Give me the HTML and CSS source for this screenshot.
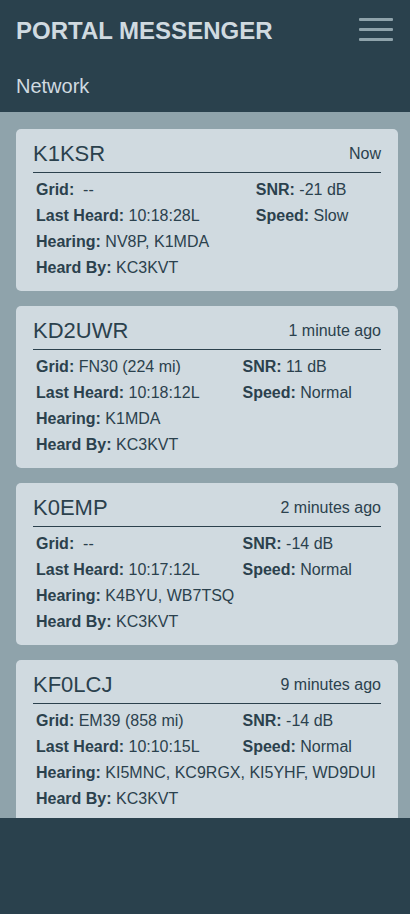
FILE: index.html
```html
<!DOCTYPE html>
<html lang="en">
<head>
<meta charset="utf-8">
<title>Portal Messenger - Network</title>
<link rel="stylesheet" href="styles.css">
</head>
<body>
<header class="app-header">
  <div class="topbar">
    <h1 class="brand">PORTAL MESSENGER</h1>
    <button class="menu-btn" aria-label="Menu">
      <span></span><span></span><span></span>
    </button>
  </div>
  <div class="page-title">Network</div>
</header>
<main class="content">
  <section class="card">
    <div class="card-head"><span class="call">K1KSR</span><span class="when">Now</span></div>
    <table class="info">
      <tr><td><b>Grid:</b>&nbsp; --</td><td><b>SNR:</b> -21 dB</td></tr>
      <tr><td><b>Last Heard:</b> 10:18:28L</td><td><b>Speed:</b> Slow</td></tr>
      <tr><td colspan="2"><b>Hearing:</b> NV8P, K1MDA</td></tr>
      <tr><td colspan="2"><b>Heard By:</b> KC3KVT</td></tr>
    </table>
  </section>
  <section class="card">
    <div class="card-head"><span class="call">KD2UWR</span><span class="when">1 minute ago</span></div>
    <table class="info">
      <tr><td><b>Grid:</b> FN30 (224 mi)</td><td><b>SNR:</b> 11 dB</td></tr>
      <tr><td><b>Last Heard:</b> 10:18:12L</td><td><b>Speed:</b> Normal</td></tr>
      <tr><td colspan="2"><b>Hearing:</b> K1MDA</td></tr>
      <tr><td colspan="2"><b>Heard By:</b> KC3KVT</td></tr>
    </table>
  </section>
  <section class="card">
    <div class="card-head"><span class="call">K0EMP</span><span class="when">2 minutes ago</span></div>
    <table class="info">
      <tr><td><b>Grid:</b>&nbsp; --</td><td><b>SNR:</b> -14 dB</td></tr>
      <tr><td><b>Last Heard:</b> 10:17:12L</td><td><b>Speed:</b> Normal</td></tr>
      <tr><td colspan="2"><b>Hearing:</b> K4BYU, WB7TSQ</td></tr>
      <tr><td colspan="2"><b>Heard By:</b> KC3KVT</td></tr>
    </table>
  </section>
  <section class="card">
    <div class="card-head"><span class="call">KF0LCJ</span><span class="when">9 minutes ago</span></div>
    <table class="info">
      <tr><td><b>Grid:</b> EM39 (858 mi)</td><td><b>SNR:</b> -14 dB</td></tr>
      <tr><td><b>Last Heard:</b> 10:10:15L</td><td><b>Speed:</b> Normal</td></tr>
      <tr><td colspan="2"><b>Hearing:</b> KI5MNC, KC9RGX, KI5YHF, WD9DUI</td></tr>
      <tr><td colspan="2"><b>Heard By:</b> KC3KVT</td></tr>
    </table>
  </section>
</main>
<footer class="app-footer"></footer>
</body>
</html>
```

FILE: styles.css
```css
* { box-sizing: border-box; }
html, body { height: 100%; }
body {
  margin: 0;
  font-family: "Liberation Sans", Arial, sans-serif;
  color: #2b414d;
  background: #2a414d;
  display: flex;
  flex-direction: column;
  height: 100vh;
  overflow: hidden;
}
.app-header {
  background: #2a414d;
  color: #d0dae0;
  height: 112px;
  flex: none;
}
.topbar {
  height: 60px;
  padding: 1px 17px 0 16px;
  display: flex;
  align-items: center;
  justify-content: space-between;
}
.brand {
  margin: 0;
  font-size: 24px;
  font-weight: bold;
  line-height: 28px;
  color: #d0dae0;
}
.menu-btn {
  background: none;
  border: 0;
  padding: 0;
  width: 34px;
  height: 23px;
  margin-top: -2px;
  display: flex;
  flex-direction: column;
  justify-content: space-between;
  cursor: pointer;
}
.menu-btn span {
  display: block;
  height: 3px;
  border-radius: 1px;
  background: #8fa3ab;
}
.page-title {
  padding: 15px 16px 14px;
  font-size: 20px;
  line-height: 23px;
}
.content {
  flex: 1;
  min-height: 0;
  overflow: hidden;
  background: #8fa3ab;
  padding: 17px 12px 17px 16px;
  display: flex;
  flex-direction: column;
  gap: 15px;
}
.card {
  flex: none;
  background: #d0dae0;
  border-radius: 5px;
  padding: 12px 17px 9px;
}
.card-head {
  display: flex;
  justify-content: space-between;
  align-items: center;
  padding-bottom: 6px;
  border-bottom: 1px solid #2b414d;
}
.call {
  font-size: 22px;
  line-height: 25px;
}
.when {
  font-size: 16px;
}
.info {
  width: 100%;
  margin-top: 3px;
  border-spacing: 2px;
  font-size: 16px;
}
.info td {
  padding: 1px;
  line-height: 22px;
  white-space: nowrap;
}
.info b { font-weight: bold; }
.app-footer {
  height: 96px;
  flex: none;
  background: #2a414d;
}
```
